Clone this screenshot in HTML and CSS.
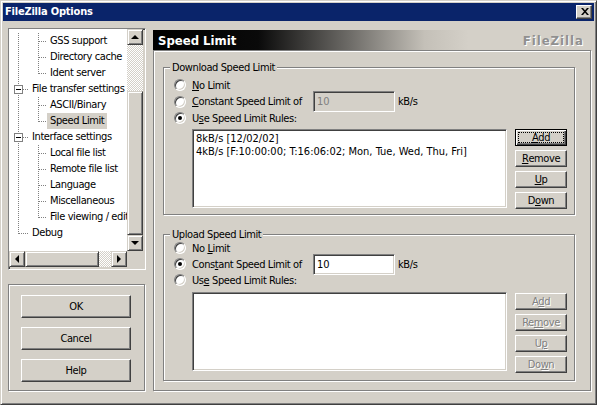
FILE: index.html
```html
<!DOCTYPE html>
<html>
<head>
<meta charset="utf-8">
<title>FileZilla Options</title>
<link rel="stylesheet" href="styles.css">
</head>
<body>
<div class="window">
  <div class="titlebar">
    <span class="title">FileZilla Options</span>
    <span class="close raised"><svg width="14" height="12" viewBox="1 1 14 12"><polygon points="5,3 7,3 13,10 11,10"/><polygon points="11,3 13,3 7,10 5,10"/></svg></span>
  </div>
  <div class="main">
    <div class="left">
      <div class="tree sunken">
        <div class="tree-items">
          <div class="row"><svg class="g" width="38" height="16"><path d="M9.5 0V16M29.5 0V16M30 8.5H38"/></svg><span>GSS support</span></div>
          <div class="row"><svg class="g" width="38" height="16"><path d="M9.5 0V16M29.5 0V16M30 8.5H38"/></svg><span>Directory cache</span></div>
          <div class="row"><svg class="g" width="38" height="16"><path d="M9.5 0V16M29.5 0V9M30 8.5H38"/></svg><span>Ident server</span></div>
          <div class="row"><svg class="g" width="20" height="16"><path d="M9.5 0V16M14 8.5H20"/><rect class="box" x="5.5" y="4.5" width="8" height="8"/><path class="minus" d="M7 8.5H12"/></svg><span>File transfer settings</span></div>
          <div class="row"><svg class="g" width="38" height="16"><path d="M9.5 0V16M29.5 0V16M30 8.5H38"/></svg><span>ASCII/Binary</span></div>
          <div class="row"><svg class="g" width="38" height="16"><path d="M9.5 0V16M29.5 0V9M30 8.5H38"/></svg><span class="sel">Speed Limit</span></div>
          <div class="row"><svg class="g" width="20" height="16"><path d="M9.5 0V16M14 8.5H20"/><rect class="box" x="5.5" y="4.5" width="8" height="8"/><path class="minus" d="M7 8.5H12"/></svg><span>Interface settings</span></div>
          <div class="row"><svg class="g" width="38" height="16"><path d="M9.5 0V16M29.5 0V16M30 8.5H38"/></svg><span>Local file list</span></div>
          <div class="row"><svg class="g" width="38" height="16"><path d="M9.5 0V16M29.5 0V16M30 8.5H38"/></svg><span>Remote file list</span></div>
          <div class="row"><svg class="g" width="38" height="16"><path d="M9.5 0V16M29.5 0V16M30 8.5H38"/></svg><span>Language</span></div>
          <div class="row"><svg class="g" width="38" height="16"><path d="M9.5 0V16M29.5 0V16M30 8.5H38"/></svg><span>Miscellaneous</span></div>
          <div class="row"><svg class="g" width="38" height="16"><path d="M9.5 0V16M29.5 0V9M30 8.5H38"/></svg><span>File viewing / edit</span></div>
          <div class="row"><svg class="g" width="20" height="16"><path d="M9.5 0V9M10 8.5H20"/></svg><span>Debug</span></div>
        </div>
        <div class="vscroll">
          <div class="sbtn"><svg width="14" height="14" viewBox="1 1 14 14"><polygon points="4,10 12,10 8,6"/></svg></div>
          <div class="track v1"></div>
          <div class="sbtn thumb-v"></div>
          <div class="sbtn"><svg width="14" height="14" viewBox="1 1 14 14"><polygon points="4,6 12,6 8,10"/></svg></div>
        </div>
        <div class="hscroll">
          <div class="sbtn"><svg width="14" height="14" viewBox="1 1 14 14"><polygon points="10,4 10,12 6,8"/></svg></div>
          <div class="sbtn thumb-h"></div>
          <div class="track h1"></div>
          <div class="sbtn"><svg width="14" height="14" viewBox="1 1 14 14"><polygon points="6,4 6,12 10,8"/></svg></div>
        </div>
        <div class="corner"></div>
      </div>
      <div class="etched btn-group">
        <div class="btn raised big">OK</div>
        <div class="btn raised big">Cancel</div>
        <div class="btn raised big">Help</div>
      </div>
    </div>
    <div class="right">
      <div class="page-header">
        <span class="page-title">Speed Limit</span>
        <span class="brand">FileZilla</span>
      </div>
      <div class="etched page-frame">
        <div class="etched group dl">
          <div class="group-label">Download Speed Limit</div>
          <div class="group-body">
            <div class="opts">
              <div class="opt"><span class="radio"></span><span><u>N</u>o Limit</span></div>
              <div class="opt mid"><span class="radio"></span><span class="lbl-fixed"><u>C</u>onstant Speed Limit of</span><span class="field sunken disabled">10</span><span class="unit">kB/s</span></div>
              <div class="opt"><span class="radio on"></span><span>U<u>s</u>e Speed Limit Rules:</span></div>
            </div>
            <div class="rules">
              <div class="listbox sunken">
                <div>8kB/s [12/02/02]</div>
                <div>4kB/s [F:10:00:00; T:16:06:02; Mon, Tue, Wed, Thu, Fri]</div>
              </div>
              <div class="side-btns">
                <div class="btn small default"><span class="focus"><u>A</u>dd</span></div>
                <div class="btn small raised"><u>R</u>emove</div>
                <div class="btn small raised"><u>U</u>p</div>
                <div class="btn small raised">D<u>o</u>wn</div>
              </div>
            </div>
          </div>
        </div>
        <div class="etched group ul">
          <div class="group-label">Upload Speed Limit</div>
          <div class="group-body">
            <div class="opts">
              <div class="opt"><span class="radio"></span><span>No <u>L</u>imit</span></div>
              <div class="opt"><span class="radio on"></span><span class="lbl-fixed">Cons<u>t</u>ant Speed Limit of</span><span class="field sunken">10</span><span class="unit">kB/s</span></div>
              <div class="opt"><span class="radio"></span><span>Us<u>e</u> Speed Limit Rules:</span></div>
            </div>
            <div class="rules">
              <div class="listbox sunken"></div>
              <div class="side-btns">
                <div class="btn small raised disabled">A<u>d</u>d</div>
                <div class="btn small raised disabled">Re<u>m</u>ove</div>
                <div class="btn small raised disabled">U<u>p</u></div>
                <div class="btn small raised disabled">Do<u>w</u>n</div>
              </div>
            </div>
          </div>
        </div>
      </div>
    </div>
  </div>
</div>
</body>
</html>
```
FILE: styles.css
```css
* { box-sizing: border-box; }
html, body { margin: 0; padding: 0; }
body {
  width: 597px;
  height: 405px;
  overflow: hidden;
  background: #d4d0c8;
  color: #000;
  font-family: "DejaVu Sans Condensed", "DejaVu Sans", sans-serif;
  font-stretch: condensed;
  font-size: 11px;
  line-height: 13px;
  letter-spacing: -0.4px;
}
u { text-decoration: underline; text-underline-offset: 1px; }

.window {
  width: 597px;
  height: 405px;
  background: #d4d0c8;
  border: 1px solid;
  border-color: #d4d0c8 #404040 #404040 #d4d0c8;
  box-shadow: inset 1px 1px #fff, inset -1px -1px #808080;
  padding: 2px;
  display: flex;
  flex-direction: column;
}

/* bevels */
.raised {
  background: #d4d0c8;
  border: 1px solid;
  border-color: #fff #404040 #404040 #fff;
  box-shadow: inset -1px -1px #808080;
}
.sunken {
  border: 1px solid;
  border-color: #808080 #fff #fff #808080;
  box-shadow: inset 1px 1px #404040, inset -1px -1px #d4d0c8;
}
.etched {
  border: 1px solid #808080;
  box-shadow: inset 1px 1px #fff, 1px 1px #fff;
}

/* title bar */
.titlebar {
  height: 18px;
  flex: none;
  background: #0a246a;
  color: #fff;
  font-weight: bold;
  letter-spacing: -0.2px;
  display: flex;
  align-items: center;
  justify-content: space-between;
  padding: 0 2px;
}
.title { line-height: 14px; }
.close {
  width: 16px;
  height: 14px;
  display: flex;
}
.close svg { display: block; fill: #000; }

/* main layout */
.main {
  display: flex;
  gap: 7px;
  padding: 7px 0 0 5px;
}
.left {
  width: 138px;
  display: flex;
  flex-direction: column;
  gap: 14px;
}

/* tree */
.tree {
  height: 242px;
  display: grid;
  grid-template-columns: 118px 16px;
  grid-template-rows: 222px 16px;
}
.tree-items {
  background: #fff;
  overflow: hidden;
  padding-top: 4px;
}
.row {
  display: flex;
  align-items: center;
  height: 16px;
  white-space: nowrap;
}
.row span { line-height: 16px; padding: 0 3px; }
.row .sel { background: #d4d0c8; }
.g { flex: none; display: block; shape-rendering: crispEdges; }
.g path { stroke: #808080; stroke-width: 1; stroke-dasharray: 1 1; fill: none; }
.g .box { fill: #fff; stroke: #808080; stroke-width: 1; stroke-dasharray: none; }
.g .minus { stroke: #000; stroke-dasharray: none; }

.vscroll { display: flex; flex-direction: column; }
.hscroll { display: flex; }
.sbtn {
  flex: none;
  width: 16px;
  height: 16px;
  background: #d4d0c8;
  border: 1px solid;
  border-color: #d4d0c8 #404040 #404040 #d4d0c8;
  box-shadow: inset 1px 1px #fff, inset -1px -1px #808080;
  display: flex;
}
.sbtn svg { display: block; fill: #000; }
.track {
  background-color: #fff;
  background-image: repeating-conic-gradient(#d4d0c8 0 25%, #fff 0 50%);
  background-size: 2px 2px;
}
.track.v1 { height: 46px; }
.thumb-v { height: 144px; }
.track.h1 { width: 12px; height: 16px; }
.thumb-h { width: 74px; }
.corner { background: #d4d0c8; }

/* left buttons */
.btn-group {
  width: 137px;
  height: 107px;
  padding: 10px 0 0 12px;
  display: flex;
  flex-direction: column;
  gap: 9px;
}
.btn {
  display: flex;
  align-items: center;
  justify-content: center;
  white-space: nowrap;
}
.btn.big { width: 110px; height: 23px; }

/* right side */
.right {
  width: 438px;
  margin-top: 2px;
  display: flex;
  flex-direction: column;
}
.page-header {
  height: 20px;
  display: flex;
  align-items: center;
  justify-content: space-between;
  padding: 0 7px 0 5px;
  background: linear-gradient(90deg, #000 0%, #0a0a0a 24%, #6e6c68 45%, #c4c0b8 62%, #d4d0c8 72%, #d4d0c8 100%);
  font-weight: bold;
  font-size: 13px;
  letter-spacing: 0;
}
.page-title { color: #fff; }
.brand {
  color: #909090;
  text-shadow: 1px 1px #fff;
  letter-spacing: 1px;
  margin-top: 1px;
}
.page-frame {
  height: 341px;
  padding: 16px 0 0 9px;
}

/* group boxes */
.group {
  width: 412px;
  display: flex;
  flex-direction: column;
}
.group.ul { margin-top: 19px; }
.group-label {
  align-self: flex-start;
  margin: -7px 0 0 6px;
  padding: 0 2px;
  background: #d4d0c8;
  line-height: 13px;
}
.group-body { padding: 3px 6px 5px 10px; }
.group.ul .group-body { padding: 0 6px 7px 10px; }
.group.ul .opts { margin-top: -1px; }

.opt {
  display: flex;
  align-items: center;
  height: 16px;
  white-space: nowrap;
}
.opt.mid { height: 17px; }
.radio {
  flex: none;
  position: relative;
  width: 12px;
  height: 12px;
  margin-right: 6px;
  border-radius: 50%;
  background: #fff;
  border: 1px solid;
  border-color: #808080 #fff #fff #808080;
  box-shadow: inset 1px 1px #404040, inset -1px -1px #d4d0c8;
}
.radio.on::after {
  content: "";
  position: absolute;
  left: 3px;
  top: 3px;
  width: 4px;
  height: 4px;
  border-radius: 50%;
  background: #000;
}
.lbl-fixed { width: 121px; flex: none; }
.field {
  flex: none;
  width: 82px;
  height: 21px;
  background: #fff;
  padding-left: 3px;
  display: flex;
  align-items: center;
  letter-spacing: 0;
}
.field.disabled { background: #d4d0c8; color: #808080; }
.unit { margin-left: 3px; }

.rules {
  display: flex;
  gap: 8px;
  margin: 3px 0 0 18px;
}
.group.ul .rules { margin-top: 4px; }
.listbox {
  width: 315px;
  height: 79px;
  background: #fff;
  padding: 2px 3px;
  white-space: nowrap;
  overflow: hidden;
  letter-spacing: 0;
}
.side-btns {
  display: flex;
  flex-direction: column;
  gap: 4px;
}
.group.ul .side-btns { margin-top: 1px; }
.btn.small { width: 52px; height: 17px; }
.btn.default {
  background: #d4d0c8;
  border: 1px solid #000;
  box-shadow: inset 1px 1px #fff, inset -1px -1px #404040, inset -2px -2px #808080;
  align-items: stretch;
}
.focus {
  flex: 1;
  margin: 2px;
  border: 1px dotted #000;
  display: flex;
  align-items: center;
  justify-content: center;
  line-height: 9px;
}
.btn.disabled { color: #808080; text-shadow: 1px 1px #fff; }
```
